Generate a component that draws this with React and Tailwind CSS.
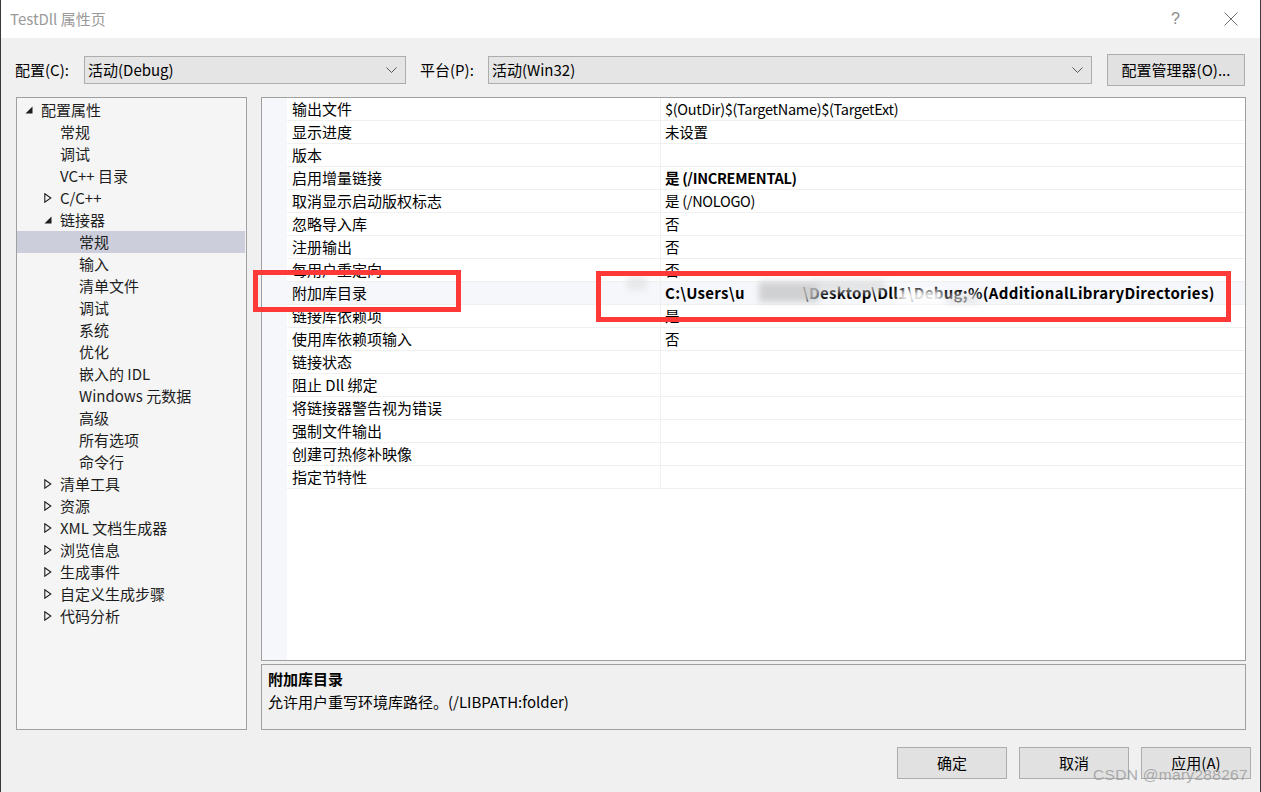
import React from "react";

const tree = [
  { l: 0, t: "配置属性", e: "open" },
  { l: 1, t: "常规" },
  { l: 1, t: "调试" },
  { l: 1, t: "VC++ 目录" },
  { l: 1, t: "C/C++", e: "closed" },
  { l: 1, t: "链接器", e: "open" },
  { l: 2, t: "常规", sel: true },
  { l: 2, t: "输入" },
  { l: 2, t: "清单文件" },
  { l: 2, t: "调试" },
  { l: 2, t: "系统" },
  { l: 2, t: "优化" },
  { l: 2, t: "嵌入的 IDL" },
  { l: 2, t: "Windows 元数据" },
  { l: 2, t: "高级" },
  { l: 2, t: "所有选项" },
  { l: 2, t: "命令行" },
  { l: 1, t: "清单工具", e: "closed" },
  { l: 1, t: "资源", e: "closed" },
  { l: 1, t: "XML 文档生成器", e: "closed" },
  { l: 1, t: "浏览信息", e: "closed" },
  { l: 1, t: "生成事件", e: "closed" },
  { l: 1, t: "自定义生成步骤", e: "closed" },
  { l: 1, t: "代码分析", e: "closed" },
];

const rows = [
  ["输出文件", "$(OutDir)$(TargetName)$(TargetExt)"],
  ["显示进度", "未设置"],
  ["版本", ""],
  ["启用增量链接", "是 (/INCREMENTAL)", true],
  ["取消显示启动版权标志", "是 (/NOLOGO)"],
  ["忽略导入库", "否"],
  ["注册输出", "否"],
  ["每用户重定向", "否"],
  ["附加库目录", "PATH", true],
  ["链接库依赖项", "是"],
  ["使用库依赖项输入", "否"],
  ["链接状态", ""],
  ["阻止 Dll 绑定", ""],
  ["将链接器警告视为错误", ""],
  ["强制文件输出", ""],
  ["创建可热修补映像", ""],
  ["指定节特性", ""],
];

const indent = ["pl-[5px]", "pl-[24px]", "pl-[43px]"];

function Open() {
  return (
    <svg width="8" height="8" viewBox="0 0 8 8">
      <polygon points="7.5,0.5 7.5,7.5 0.5,7.5" fill="#1e1e1e" />
    </svg>
  );
}
function Closed() {
  return (
    <svg width="8" height="10" viewBox="0 0 8 10">
      <polygon points="0.8,0.8 6.8,5 0.8,9.2" fill="none" stroke="#1e1e1e" strokeWidth="1.1" />
    </svg>
  );
}

function Chevron() {
  return (
    <svg width="11" height="7" viewBox="0 0 11 7">
      <polyline points="0.5,0.5 5.5,5.5 10.5,0.5" fill="none" stroke="#555" strokeWidth="1" />
    </svg>
  );
}

function Combo({ w, text }) {
  return (
    <div className={`${w} h-[28px] bg-[#e5e5e5] border border-[#adadad] flex items-center justify-between pl-[3px] pr-[8px]`}>
      <span className="text-[15px] text-[#000]">{text}</span>
      <Chevron />
    </div>
  );
}

function Btn({ children, cls }) {
  return (
    <div className={`${cls} h-[32px] bg-[#e1e1e1] border border-[#adadad] flex items-center justify-center text-[15px] text-[#000]`}>
      {children}
    </div>
  );
}

function PathValue() {
  return (
    <span className="relative font-bold text-[15px] tracking-[0.32px] whitespace-nowrap">
      C:\Users\u
      <span className="inline-block w-[58px] h-[14px] align-middle" />
      \Desktop\Dll1\Debug;%(AdditionalLibraryDirectories)
      <span className="absolute left-[94px] top-[0px] w-[60px] h-[20px] bg-[#c8c8c8] blur-[3px] opacity-80" />
      <span className="absolute left-[150px] top-[-2px] w-[70px] h-[12px] bg-[#dcdcdc] blur-[3px] opacity-70" />
      <span className="absolute left-[233px] top-[8px] w-[45px] h-[14px] bg-white blur-[3px] opacity-90" />
      <span className="absolute left-[-38px] top-[-6px] w-[20px] h-[14px] bg-[#e2e2e2] blur-[3px] opacity-70" />
      <span className="absolute left-[283px] top-[12px] w-[30px] h-[10px] bg-[#e4e4e4] blur-[3px] opacity-70" />
    </span>
  );
}

export default function App() {
  return (
    <div className="relative w-[1261px] h-[792px] bg-[#f0f0f0] border-x border-[#3a3a3a] flex flex-col font-['Noto_Sans_CJK_SC','Noto_Sans',sans-serif] text-[#000] overflow-hidden">
      {/* title bar */}
      <div className="h-[38px] bg-white flex items-center justify-between pl-[9px] pr-[22px] shrink-0">
        <span className="text-[15px] text-[#9a9a9a]">TestDll 属性页</span>
        <div className="flex items-center gap-[44px]">
          <span className="text-[16px] text-[#8a8a8a] font-['Liberation_Sans',sans-serif]">?</span>
          <svg width="14" height="14" viewBox="0 0 14 14">
            <line x1="0.5" y1="0.5" x2="13.5" y2="13.5" stroke="#707070" strokeWidth="1" />
            <line x1="13.5" y1="0.5" x2="0.5" y2="13.5" stroke="#707070" strokeWidth="1" />
          </svg>
        </div>
      </div>

      {/* config row */}
      <div className="flex items-center h-[32px] mt-[16px] pl-[14px]">
        <span className="w-[69px] text-[15px]">配置(C):</span>
        <Combo w="w-[322px]" text="活动(Debug)" />
        <span className="w-[68px] ml-[14px] text-[15px]">平台(P):</span>
        <Combo w="w-[604px]" text="活动(Win32)" />
        <Btn cls="ml-[15px] w-[138px]">配置管理器(O)...</Btn>
      </div>

      {/* main */}
      <div className="flex mt-[11px] pl-[15px] h-[633px]">
        <div className="w-[231px] h-full bg-[#f5f5f5] border border-[#a0a0a0] pt-[1px]">
          {tree.map((n, i) => (
            <div
              key={i}
              className={`h-[22px] flex items-center ${indent[n.l]} ${n.sel ? "bg-[#cccedb] mr-[1px]" : ""}`}
            >
              <span className="w-[19px] pl-[3px] flex items-center">
                {n.e === "open" ? <Open /> : n.e === "closed" ? <Closed /> : null}
              </span>
              <span className="text-[15px] text-[#1e1e1e] whitespace-nowrap">{n.t}</span>
            </div>
          ))}
        </div>

        <div className="ml-[14px] w-[985px] h-full flex flex-col">
          <div className="h-[564px] bg-white border border-[#a0a0a0] flex">
            <div className="w-[25px] bg-[#f5f7fa] shrink-0" />
            <div className="flex-1 flex flex-col">
              {rows.map(([k, v, b], i) => (
                <div
                  key={i}
                  className={`h-[23px] flex border-b border-[#f0f0f0] ${i === 8 ? "bg-[#f5f7fb]" : ""}`}
                >
                  <div className="w-[374px] border-r border-[#f0f0f0] pl-[5px] flex items-center text-[15px] whitespace-nowrap">
                    {k}
                  </div>
                  <div className={`flex-1 pl-[4px] flex items-center text-[14.5px] whitespace-nowrap ${b ? "font-bold" : ""} tracking-[-0.3px]`}>
                    {v === "PATH" ? <PathValue /> : v}
                  </div>
                </div>
              ))}
            </div>
          </div>
          <div className="mt-[3px] flex-1 bg-[#f0f0f0] border border-[#a0a0a0] pl-[6px] pt-[2px]">
            <div className="text-[15px] font-bold leading-[23px]">附加库目录</div>
            <div className="text-[15px] leading-[23px]">允许用户重写环境库路径。(/LIBPATH:folder)</div>
          </div>
        </div>
      </div>

      {/* buttons */}
      <div className="flex justify-end gap-[12px] mt-[17px] pr-[9px]">
        <Btn cls="w-[110px]">确定</Btn>
        <Btn cls="w-[110px]">取消</Btn>
        <Btn cls="w-[110px]">应用(A)</Btn>
      </div>

      {/* annotations */}
      <div className="absolute left-[252px] top-[270px] w-[208px] h-[42px] border-[5px] border-[#ff3838]" />
      <div className="absolute left-[595px] top-[271px] w-[635px] h-[51px] border-[5px] border-[#ff3838]" />

      {/* watermark */}
      <div className="absolute left-[1092px] top-[763px] text-[15.5px] text-[#9a9a9a]/80 font-['Liberation_Sans',sans-serif] tracking-[0.3px]">
        CSDN @mary288267
      </div>
    </div>
  );
}
